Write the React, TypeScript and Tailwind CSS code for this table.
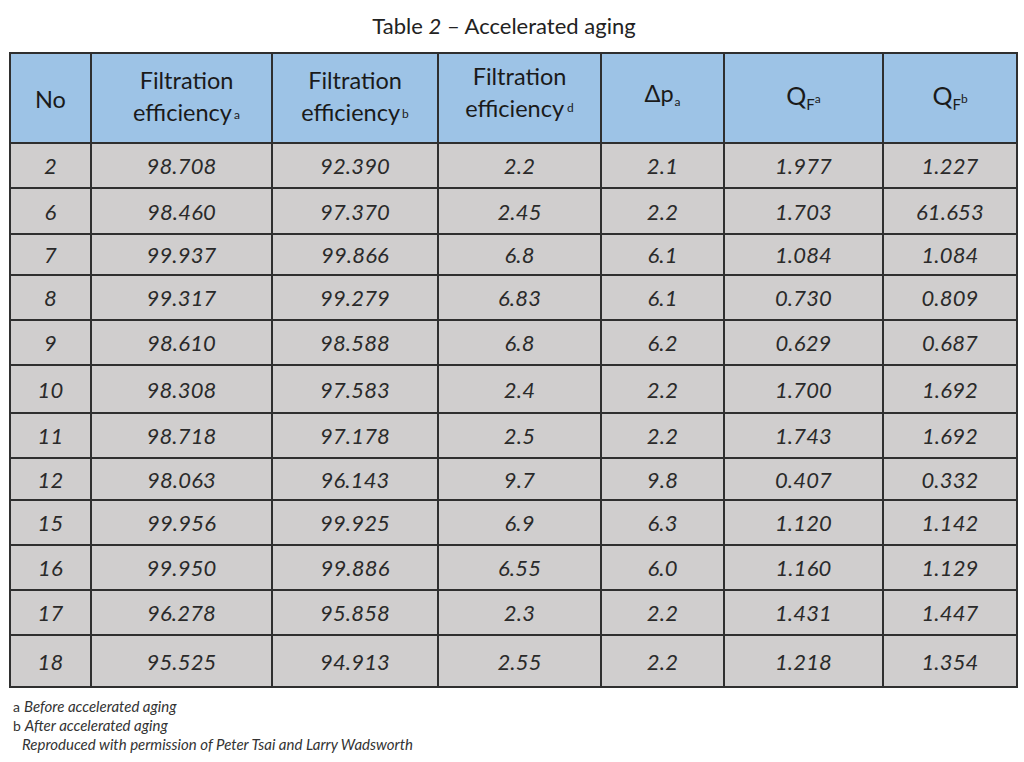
import React from "react";

const rows: string[][] = [
  ["2", "98.708", "92.390", "2.2", "2.1", "1.977", "1.227"],
  ["6", "98.460", "97.370", "2.45", "2.2", "1.703", "61.653"],
  ["7", "99.937", "99.866", "6.8", "6.1", "1.084", "1.084"],
  ["8", "99.317", "99.279", "6.83", "6.1", "0.730", "0.809"],
  ["9", "98.610", "98.588", "6.8", "6.2", "0.629", "0.687"],
  ["10", "98.308", "97.583", "2.4", "2.2", "1.700", "1.692"],
  ["11", "98.718", "97.178", "2.5", "2.2", "1.743", "1.692"],
  ["12", "98.063", "96.143", "9.7", "9.8", "0.407", "0.332"],
  ["15", "99.956", "99.925", "6.9", "6.3", "1.120", "1.142"],
  ["16", "99.950", "99.886", "6.55", "6.0", "1.160", "1.129"],
  ["17", "96.278", "95.858", "2.3", "2.2", "1.431", "1.447"],
  ["18", "95.525", "94.913", "2.55", "2.2", "1.218", "1.354"],
];

function Head({ children, className = "" }: { children: React.ReactNode; className?: string }) {
  return (
    <div className={"bg-[#9dc3e6] flex flex-col items-center justify-center text-center text-[23.5px] leading-[32px] text-[#1a1a1a] " + className}>
      {children}
    </div>
  );
}

export default function App() {
  return (
    <div className="w-[1024px] h-[762px] bg-white font-[Lato,sans-serif] overflow-hidden">
      <div className="h-[52px] flex items-center justify-center pr-[16px] pb-[2px] text-[22px] text-[#222]">
        <span>
          Table <span className="italic">2</span> – Accelerated aging
        </span>
      </div>
      <div className="ml-[9px] w-[1009px] grid grid-cols-[79px_179px_164px_161px_121px_157px_132px] grid-rows-[88px_43px_44px_39px_43px_43px_46px_43px_40px_43px_43px_43px_50px] gap-[2px] p-[2px] bg-[#2f2f2f]">
        <Head>
          <span className="pt-[2px]">No</span>
        </Head>
        <Head className="pl-[10px]">
          <span>Filtration</span>
          <span>
            efficiency<span className="text-[12px] relative -top-[2px] ml-[2px]">a</span>
          </span>
        </Head>
        <Head>
          <span>Filtration</span>
          <span>
            efficiency<span className="text-[12px] relative -top-[3px] ml-[2px]">b</span>
          </span>
        </Head>
        <Head className="pb-[7px]">
          <span>Filtration</span>
          <span>
            efficiency<span className="text-[12px] relative -top-[5px] ml-[3px]">d</span>
          </span>
        </Head>
        <Head className="pb-[6px]">
          <span>
            Δp<span className="text-[12px] relative top-[4px] ml-[1px]">a</span>
          </span>
        </Head>
        <Head>
          <span>
            <span className="text-[25px]">Q</span>
            <span className="text-[15px] relative top-[5px]">F</span>
            <span className="text-[12px] relative -top-[2px]">a</span>
          </span>
        </Head>
        <Head>
          <span>
            <span className="text-[25px]">Q</span>
            <span className="text-[15px] relative top-[5px]">F</span>
            <span className="text-[12px] relative -top-[2px]">b</span>
          </span>
        </Head>
        {rows.map((r, i) =>
          r.map((v, j) => (
            <div
              key={i + "-" + j}
              className="bg-[#d0cece] flex items-center justify-center italic text-[22px] text-[#2a2a2a] tracking-[0.2px]"
            >
              {v}
            </div>
          ))
        )}
      </div>
      <div className="mt-[9px] ml-[13px] text-[15px] leading-[19px] text-[#333]">
        <div>
          <span className="not-italic text-[14px] mr-[4px]">a</span>
          <span className="italic">Before accelerated aging</span>
        </div>
        <div>
          <span className="not-italic text-[14px] mr-[4px]">b</span>
          <span className="italic">After accelerated aging</span>
        </div>
        <div className="pl-[9px] italic">Reproduced with permission of Peter Tsai and Larry Wadsworth</div>
      </div>
    </div>
  );
}
